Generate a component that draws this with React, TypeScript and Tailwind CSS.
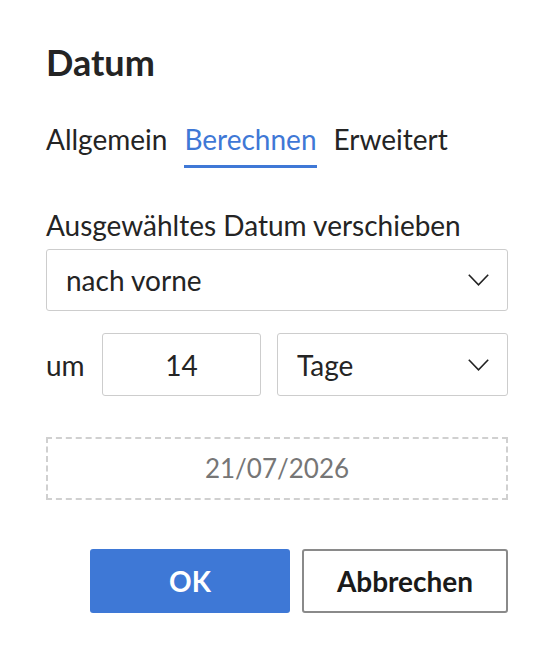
import React from "react";

function Chevron() {
  return (
    <svg width="21" height="12" viewBox="0 0 21 12" fill="none" className="shrink-0">
      <path d="M0.8 0.8L10.5 10.8L20.2 0.8" stroke="#222" strokeWidth="1.6" />
    </svg>
  );
}

export default function App() {
  return (
    <div
      className="w-[554px] h-[654px] bg-white text-[#242424] px-[46px]"
      style={{ fontFamily: 'Lato, "Open Sans", sans-serif' }}
    >
      <h1 className="pt-[40px] h-[94px] text-[36px] font-bold leading-[44px]">Datum</h1>
      <div className="mt-[27px] flex gap-[17px] text-[28px] leading-[36px]">
        <div className="pb-[8px] border-b-[3px] border-transparent">Allgemein</div>
        <div className="pb-[8px] border-b-[3px] border-[#3f78d6] text-[#3f78d6]">Berechnen</div>
        <div className="pb-[8px] border-b-[3px] border-transparent">Erweitert</div>
      </div>
      <div className="mt-[40px] text-[28px] leading-[34px]">Ausgewähltes Datum verschieben</div>
      <div className="mt-[7px] h-[62px] border border-[#cdcdcd] rounded-[3px] flex items-center justify-between pl-[19px] pr-[18px] text-[28px]">
        <span>nach vorne</span>
        <Chevron />
      </div>
      <div className="mt-[22px] flex items-center h-[63px] text-[28px]">
        <span className="w-[56px]">um</span>
        <div className="w-[159px] h-full border border-[#cdcdcd] rounded-[3px] flex items-center justify-center">14</div>
        <div className="ml-[16px] flex-1 h-full border border-[#cdcdcd] rounded-[3px] flex items-center justify-between pl-[19px] pr-[18px]">
          <span>Tage</span>
          <Chevron />
        </div>
      </div>
      <div className="mt-[41px] h-[63px] border-2 border-dashed border-[#d0d0d0] flex items-center justify-center text-[26px] text-[#767676]">
        21/07/2026
      </div>
      <div className="mt-[49px] flex justify-end gap-[12px] text-[28px] font-bold">
        <button className="w-[200px] h-[64px] rounded-[3px] bg-[#3e78d6] text-white">OK</button>
        <button className="w-[206px] h-[64px] rounded-[3px] border-2 border-[#8a8a8a] bg-white text-[#1a1a1a]">Abbrechen</button>
      </div>
    </div>
  );
}
